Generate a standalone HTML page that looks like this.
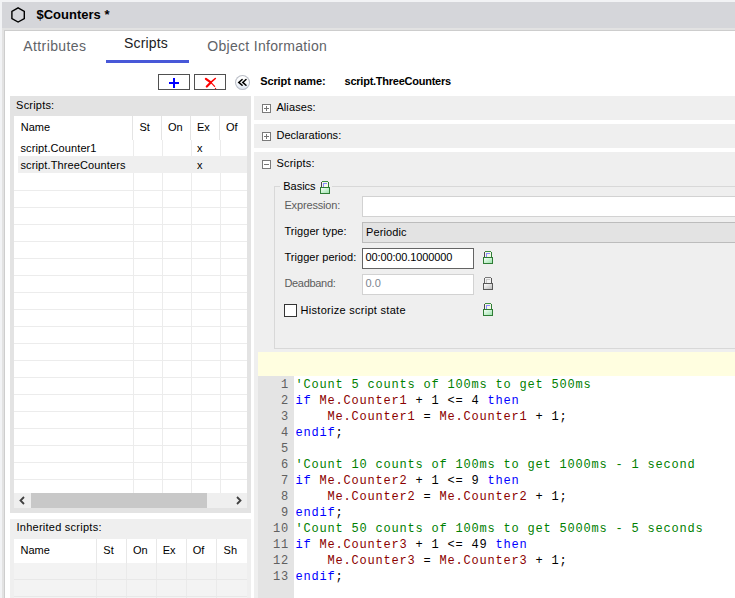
<!DOCTYPE html>
<html><head><meta charset="utf-8">
<style>
*{box-sizing:border-box;margin:0;padding:0}
html,body{width:735px;height:598px;overflow:hidden}
body{position:relative;background:#f2f3f5;font-family:"Liberation Sans",sans-serif;font-size:11px;color:#1a1a1a}
.a{position:absolute}
.t{position:absolute;white-space:pre;line-height:1}
</style></head><body>
<div class="a" style="left:2px;top:2px;width:733px;height:26px;background:#d5d6da;"></div>
<svg class="a" style="left:10px;top:6px" width="17" height="17" viewBox="0 0 17 17"><polygon points="8.1,1.8 14.3,5.3 14.3,12.5 8.1,16 1.9,12.5 1.9,5.3" fill="none" stroke="#000" stroke-width="1.4"/></svg>
<div class="t" style="left:36.5px;top:8.00px;font-size:13px;color:#000;font-family:'Liberation Sans',sans-serif;font-weight:bold;">$Counters *</div>
<div class="a" style="left:2px;top:28px;width:733px;height:570px;background:#e2e2e2;"></div>
<div class="a" style="left:4px;top:30px;width:731px;height:568px;background:#cdcdcd;"></div>
<div class="a" style="left:5px;top:31px;width:730px;height:567px;background:#fff;"></div>
<div class="t" style="left:23.3px;top:39.15px;font-size:14px;color:#5f6368;font-family:'Liberation Sans',sans-serif;letter-spacing:0.4px;">Attributes</div>
<div class="t" style="left:124.1px;top:36.15px;font-size:14px;color:#202124;font-family:'Liberation Sans',sans-serif;letter-spacing:0.15px;">Scripts</div>
<div class="t" style="left:207.3px;top:39.15px;font-size:14px;color:#5f6368;font-family:'Liberation Sans',sans-serif;letter-spacing:0.3px;">Object Information</div>
<div class="a" style="left:106px;top:60px;width:83px;height:3px;background:#4858d8;"></div>
<div class="a" style="left:158px;top:74px;width:32px;height:16px;background:#fff;border:1px solid #505050;"></div>
<div class="a" style="left:169px;top:82px;width:10px;height:2px;background:#0000ff;"></div>
<div class="a" style="left:173px;top:78px;width:2px;height:10px;background:#0000ff;"></div>
<div class="a" style="left:194px;top:74px;width:32px;height:16px;background:#fff;border:1px solid #505050;"></div>
<svg class="a" style="left:204px;top:77px" width="14" height="13" viewBox="0 0 14 13"><path d="M1.9,1.8 L6.8,5.4 L2.8,9.5" fill="none" stroke="#f00" stroke-width="2.2" stroke-linecap="round" stroke-linejoin="round"/><path d="M6.8,5.4 L11.3,1.5" fill="none" stroke="#f00" stroke-width="1.6" stroke-linecap="round"/><path d="M6.8,5.4 L10.6,9.3" fill="none" stroke="#f00" stroke-width="1.2" stroke-linecap="round"/><circle cx="11.5" cy="11.4" r="0.7" fill="#f00"/></svg>
<div class="a" style="left:235px;top:75px;width:15px;height:15px;border-radius:50%;background:linear-gradient(180deg,#ffffff 0%,#fbfcfd 45%,#d9e2ef 100%);box-shadow:0 0 0 1px #b9bdc6 inset"></div>
<svg class="a" style="left:237px;top:78px" width="11" height="9" viewBox="0 0 11 9"><path d="M5.1,1.5 L1.8,4.4 L5.1,7.3 M9,1.5 L5.8,4.4 L9,7.3" fill="none" stroke="#000" stroke-width="1.5" stroke-linecap="round"/></svg>
<div class="t" style="left:260.2px;top:75.69px;font-size:11px;color:#000;font-family:'Liberation Sans',sans-serif;font-weight:bold;letter-spacing:-0.1px;">Script name:</div>
<div class="t" style="left:344.6px;top:75.69px;font-size:11px;color:#000;font-family:'Liberation Sans',sans-serif;font-weight:bold;letter-spacing:-0.25px;">script.ThreeCounters</div>
<div class="a" style="left:10px;top:96px;width:241px;height:417px;background:#e3e3e3;"></div>
<div class="t" style="left:16.1px;top:99.69px;font-size:11px;color:#000;font-family:'Liberation Sans',sans-serif;letter-spacing:0.2px;">Scripts:</div>
<div class="a" style="left:14px;top:116px;width:233px;height:377px;background:#fff;"></div>
<div class="a" style="left:132px;top:116px;width:1px;height:24px;background:#e4e4e4;"></div>
<div class="a" style="left:161px;top:116px;width:1px;height:24px;background:#e4e4e4;"></div>
<div class="a" style="left:190px;top:116px;width:1px;height:24px;background:#e4e4e4;"></div>
<div class="a" style="left:219px;top:116px;width:1px;height:24px;background:#e4e4e4;"></div>
<div class="t" style="left:20.8px;top:121.69px;font-size:11px;color:#000;font-family:'Liberation Sans',sans-serif;">Name</div>
<div class="t" style="left:139.4px;top:121.69px;font-size:11px;color:#000;font-family:'Liberation Sans',sans-serif;">St</div>
<div class="t" style="left:168px;top:121.69px;font-size:11px;color:#000;font-family:'Liberation Sans',sans-serif;">On</div>
<div class="t" style="left:197px;top:121.69px;font-size:11px;color:#000;font-family:'Liberation Sans',sans-serif;">Ex</div>
<div class="t" style="left:226px;top:121.69px;font-size:11px;color:#000;font-family:'Liberation Sans',sans-serif;">Of</div>
<div class="a" style="left:133px;top:140px;width:1px;height:353px;background:#ececec;"></div>
<div class="a" style="left:162px;top:140px;width:1px;height:353px;background:#ececec;"></div>
<div class="a" style="left:191px;top:140px;width:1px;height:353px;background:#ececec;"></div>
<div class="a" style="left:220px;top:140px;width:1px;height:353px;background:#ececec;"></div>
<div class="a" style="left:14px;top:190px;width:233px;height:1px;background:#ececec;"></div>
<div class="a" style="left:14px;top:207px;width:233px;height:1px;background:#ececec;"></div>
<div class="a" style="left:14px;top:224px;width:233px;height:1px;background:#ececec;"></div>
<div class="a" style="left:14px;top:241px;width:233px;height:1px;background:#ececec;"></div>
<div class="a" style="left:14px;top:258px;width:233px;height:1px;background:#ececec;"></div>
<div class="a" style="left:14px;top:275px;width:233px;height:1px;background:#ececec;"></div>
<div class="a" style="left:14px;top:292px;width:233px;height:1px;background:#ececec;"></div>
<div class="a" style="left:14px;top:309px;width:233px;height:1px;background:#ececec;"></div>
<div class="a" style="left:14px;top:326px;width:233px;height:1px;background:#ececec;"></div>
<div class="a" style="left:14px;top:343px;width:233px;height:1px;background:#ececec;"></div>
<div class="a" style="left:14px;top:360px;width:233px;height:1px;background:#ececec;"></div>
<div class="a" style="left:14px;top:377px;width:233px;height:1px;background:#ececec;"></div>
<div class="a" style="left:14px;top:394px;width:233px;height:1px;background:#ececec;"></div>
<div class="a" style="left:14px;top:411px;width:233px;height:1px;background:#ececec;"></div>
<div class="a" style="left:14px;top:428px;width:233px;height:1px;background:#ececec;"></div>
<div class="a" style="left:14px;top:445px;width:233px;height:1px;background:#ececec;"></div>
<div class="a" style="left:14px;top:462px;width:233px;height:1px;background:#ececec;"></div>
<div class="a" style="left:14px;top:479px;width:233px;height:1px;background:#ececec;"></div>
<div class="a" style="left:18px;top:156px;width:229px;height:17px;background:#efefef;"></div>
<div class="t" style="left:20.5px;top:142.69px;font-size:11px;color:#000;font-family:'Liberation Sans',sans-serif;letter-spacing:0.1px;">script.Counter1</div>
<div class="t" style="left:197px;top:142.69px;font-size:11px;color:#000;font-family:'Liberation Sans',sans-serif;">x</div>
<div class="t" style="left:20.5px;top:159.69px;font-size:11px;color:#000;font-family:'Liberation Sans',sans-serif;letter-spacing:0.12px;">script.ThreeCounters</div>
<div class="t" style="left:197px;top:159.69px;font-size:11px;color:#000;font-family:'Liberation Sans',sans-serif;">x</div>
<div class="a" style="left:14px;top:493px;width:233px;height:15px;background:#efefef;"></div>
<div class="a" style="left:31px;top:493px;width:176px;height:15px;background:#c8c8c8;"></div>
<svg class="a" style="left:18px;top:496px" width="8" height="9" viewBox="0 0 8 9"><path d="M6,1 L2.5,4.5 L6,8" fill="none" stroke="#404040" stroke-width="1.8"/></svg>
<svg class="a" style="left:235px;top:496px" width="8" height="9" viewBox="0 0 8 9"><path d="M2,1 L5.5,4.5 L2,8" fill="none" stroke="#404040" stroke-width="1.8"/></svg>
<div class="a" style="left:10px;top:519px;width:241px;height:79px;background:#efefef;"></div>
<div class="t" style="left:16.5px;top:522.19px;font-size:11px;color:#000;font-family:'Liberation Sans',sans-serif;letter-spacing:0.25px;">Inherited scripts:</div>
<div class="a" style="left:14px;top:539px;width:233px;height:24px;background:#fff;"></div>
<div class="a" style="left:14px;top:563px;width:233px;height:35px;background:#f3f3f3;"></div>
<div class="a" style="left:96px;top:539px;width:1px;height:24px;background:#e8e8e8;"></div>
<div class="a" style="left:96px;top:563px;width:1px;height:35px;background:#eaeaea;"></div>
<div class="a" style="left:126px;top:539px;width:1px;height:24px;background:#e8e8e8;"></div>
<div class="a" style="left:126px;top:563px;width:1px;height:35px;background:#eaeaea;"></div>
<div class="a" style="left:156px;top:539px;width:1px;height:24px;background:#e8e8e8;"></div>
<div class="a" style="left:156px;top:563px;width:1px;height:35px;background:#eaeaea;"></div>
<div class="a" style="left:186px;top:539px;width:1px;height:24px;background:#e8e8e8;"></div>
<div class="a" style="left:186px;top:563px;width:1px;height:35px;background:#eaeaea;"></div>
<div class="a" style="left:216px;top:539px;width:1px;height:24px;background:#e8e8e8;"></div>
<div class="a" style="left:216px;top:563px;width:1px;height:35px;background:#eaeaea;"></div>
<div class="a" style="left:14px;top:579px;width:233px;height:1px;background:#e8e8e8;"></div>
<div class="a" style="left:14px;top:596px;width:233px;height:1px;background:#e8e8e8;"></div>
<div class="t" style="left:20.5px;top:544.69px;font-size:11px;color:#000;font-family:'Liberation Sans',sans-serif;">Name</div>
<div class="t" style="left:103.3px;top:544.69px;font-size:11px;color:#000;font-family:'Liberation Sans',sans-serif;">St</div>
<div class="t" style="left:133px;top:544.69px;font-size:11px;color:#000;font-family:'Liberation Sans',sans-serif;">On</div>
<div class="t" style="left:162.7px;top:544.69px;font-size:11px;color:#000;font-family:'Liberation Sans',sans-serif;">Ex</div>
<div class="t" style="left:192.8px;top:544.69px;font-size:11px;color:#000;font-family:'Liberation Sans',sans-serif;">Of</div>
<div class="t" style="left:223.6px;top:544.69px;font-size:11px;color:#000;font-family:'Liberation Sans',sans-serif;">Sh</div>
<div class="a" style="left:254px;top:96px;width:481px;height:24px;background:#efefef;"></div>
<div class="a" style="left:254px;top:124px;width:481px;height:24px;background:#efefef;"></div>
<div class="a" style="left:254px;top:152px;width:481px;height:446px;background:#efefef;"></div>
<div class="a" style="left:262px;top:104px;width:9px;height:9px;background:#fff;border:1px solid #7a7a7a;"></div>
<div class="a" style="left:264px;top:108px;width:5px;height:1px;background:#767676;"></div>
<div class="a" style="left:266px;top:106px;width:1px;height:5px;background:#767676;"></div>
<div class="t" style="left:276.4px;top:101.69px;font-size:11px;color:#000;font-family:'Liberation Sans',sans-serif;letter-spacing:0.1px;">Aliases:</div>
<div class="a" style="left:262px;top:132px;width:9px;height:9px;background:#fff;border:1px solid #7a7a7a;"></div>
<div class="a" style="left:264px;top:136px;width:5px;height:1px;background:#767676;"></div>
<div class="a" style="left:266px;top:134px;width:1px;height:5px;background:#767676;"></div>
<div class="t" style="left:276.4px;top:129.69px;font-size:11px;color:#000;font-family:'Liberation Sans',sans-serif;letter-spacing:0.05px;">Declarations:</div>
<div class="a" style="left:262px;top:160px;width:9px;height:9px;background:#fff;border:1px solid #7a7a7a;"></div>
<div class="a" style="left:264px;top:164px;width:5px;height:1px;background:#767676;"></div>
<div class="t" style="left:276.4px;top:157.69px;font-size:11px;color:#000;font-family:'Liberation Sans',sans-serif;letter-spacing:0.2px;">Scripts:</div>
<div class="a" style="left:274px;top:186px;width:470px;height:163px;border:1px solid #d8d8d8;"></div>
<div class="a" style="left:280px;top:180px;width:52px;height:14px;background:#efefef;"></div>
<div class="t" style="left:283.2px;top:180.69px;font-size:11px;color:#000;font-family:'Liberation Sans',sans-serif;">Basics</div>
<svg class="a" style="left:320px;top:180px" width="10" height="14" viewBox="0 0 10 14" shape-rendering="crispEdges"><defs><linearGradient id="g320_180" x1="0" y1="0" x2="1" y2="1"><stop offset="0" stop-color="#f4fff4"/><stop offset="1" stop-color="#9fe3b0"/></linearGradient></defs><rect x="2" y="1" width="6" height="1" fill="#3f8f45"/><rect x="1" y="2" width="1" height="5" fill="#4a4a4a"/><rect x="8" y="2" width="1" height="5" fill="#2f7d35"/><rect x="2" y="2" width="6" height="5" fill="#f4f8e8"/><rect x="3" y="3" width="1" height="4" fill="#8c8cff"/><rect x="3" y="3" width="4" height="1" fill="#8c8cff"/><rect x="0" y="7" width="10" height="7" fill="#2f7d35"/><rect x="1" y="8" width="8" height="5" fill="url(#g320_180)"/></svg>
<div class="t" style="left:284.4px;top:199.69px;font-size:11px;color:#5c5c5c;font-family:'Liberation Sans',sans-serif;letter-spacing:-0.15px;">Expression:</div>
<div class="t" style="left:284.4px;top:225.69px;font-size:11px;color:#000;font-family:'Liberation Sans',sans-serif;letter-spacing:0.07px;">Trigger type:</div>
<div class="t" style="left:284.4px;top:251.69px;font-size:11px;color:#000;font-family:'Liberation Sans',sans-serif;letter-spacing:0.05px;">Trigger period:</div>
<div class="t" style="left:284.4px;top:277.69px;font-size:11px;color:#5c5c5c;font-family:'Liberation Sans',sans-serif;letter-spacing:-0.3px;">Deadband:</div>
<div class="a" style="left:362px;top:196px;width:400px;height:21px;background:#fff;border:1px solid #d2d2d2;"></div>
<div class="a" style="left:362px;top:222px;width:400px;height:21px;background:#e3e3e3;border:1px solid #bcbcbc;"></div>
<div class="t" style="left:366px;top:226.69px;font-size:11px;color:#000;font-family:'Liberation Sans',sans-serif;letter-spacing:0.1px;">Periodic</div>
<div class="a" style="left:362px;top:248px;width:112px;height:21px;background:#fff;border:1px solid #646464;"></div>
<div class="t" style="left:365.5px;top:251.69px;font-size:11px;color:#000;font-family:'Liberation Sans',sans-serif;letter-spacing:-0.12px;">00:00:00.1000000</div>
<div class="a" style="left:362px;top:274px;width:112px;height:21px;background:#fff;border:1px solid #d2d2d2;"></div>
<div class="t" style="left:365.5px;top:277.69px;font-size:11px;color:#7d8590;font-family:'Liberation Sans',sans-serif;">0.0</div>
<svg class="a" style="left:483px;top:250px" width="10" height="14" viewBox="0 0 10 14" shape-rendering="crispEdges"><defs><linearGradient id="g483_250" x1="0" y1="0" x2="1" y2="1"><stop offset="0" stop-color="#f4fff4"/><stop offset="1" stop-color="#9fe3b0"/></linearGradient></defs><rect x="2" y="1" width="6" height="1" fill="#3f8f45"/><rect x="1" y="2" width="1" height="5" fill="#4a4a4a"/><rect x="8" y="2" width="1" height="5" fill="#2f7d35"/><rect x="2" y="2" width="6" height="5" fill="#f4f8e8"/><rect x="3" y="3" width="1" height="4" fill="#8c8cff"/><rect x="3" y="3" width="4" height="1" fill="#8c8cff"/><rect x="0" y="7" width="10" height="7" fill="#2f7d35"/><rect x="1" y="8" width="8" height="5" fill="url(#g483_250)"/></svg>
<svg class="a" style="left:483px;top:276px" width="10" height="14" viewBox="0 0 10 14" shape-rendering="crispEdges"><defs><linearGradient id="g483_276" x1="0" y1="0" x2="1" y2="1"><stop offset="0" stop-color="#ffffff"/><stop offset="1" stop-color="#bdbdbd"/></linearGradient></defs><rect x="2" y="1" width="6" height="1" fill="#7a7a7a"/><rect x="1" y="2" width="1" height="5" fill="#666"/><rect x="8" y="2" width="1" height="5" fill="#555"/><rect x="2" y="2" width="6" height="5" fill="#f2f2f2"/><rect x="3" y="3" width="1" height="4" fill="#c9c9c9"/><rect x="3" y="3" width="4" height="1" fill="#c9c9c9"/><rect x="0" y="7" width="10" height="7" fill="#5a5a5a"/><rect x="1" y="8" width="8" height="5" fill="url(#g483_276)"/></svg>
<svg class="a" style="left:483px;top:302px" width="10" height="14" viewBox="0 0 10 14" shape-rendering="crispEdges"><defs><linearGradient id="g483_302" x1="0" y1="0" x2="1" y2="1"><stop offset="0" stop-color="#f4fff4"/><stop offset="1" stop-color="#9fe3b0"/></linearGradient></defs><rect x="2" y="1" width="6" height="1" fill="#3f8f45"/><rect x="1" y="2" width="1" height="5" fill="#4a4a4a"/><rect x="8" y="2" width="1" height="5" fill="#2f7d35"/><rect x="2" y="2" width="6" height="5" fill="#f4f8e8"/><rect x="3" y="3" width="1" height="4" fill="#8c8cff"/><rect x="3" y="3" width="4" height="1" fill="#8c8cff"/><rect x="0" y="7" width="10" height="7" fill="#2f7d35"/><rect x="1" y="8" width="8" height="5" fill="url(#g483_302)"/></svg>
<div class="a" style="left:284px;top:304px;width:13px;height:13px;background:#fff;border:1px solid #333;"></div>
<div class="t" style="left:300.6px;top:304.69px;font-size:11px;color:#000;font-family:'Liberation Sans',sans-serif;letter-spacing:0.28px;">Historize script state</div>
<div class="a" style="left:258px;top:352px;width:477px;height:24px;background:#fffee0;"></div>
<div class="a" style="left:258px;top:376px;width:36px;height:222px;background:#e4e4e4;"></div>
<div class="a" style="left:294px;top:376px;width:441px;height:222px;background:#fff;"></div>
<div class="t" style="left:281px;top:378.80px;font-size:12.0px;color:#606060;font-family:'Liberation Mono',monospace;letter-spacing:0.8000000000000007px;">1</div>
<div class="t" style="left:295.5px;top:378.80px;font-size:12.0px;color:#000;font-family:'Liberation Mono',monospace;letter-spacing:0.8000000000000007px;"><span style="color:#008000">'Count 5 counts of 100ms to get 500ms</span></div>
<div class="t" style="left:281px;top:394.80px;font-size:12.0px;color:#606060;font-family:'Liberation Mono',monospace;letter-spacing:0.8000000000000007px;">2</div>
<div class="t" style="left:295.5px;top:394.80px;font-size:12.0px;color:#000;font-family:'Liberation Mono',monospace;letter-spacing:0.8000000000000007px;"><span style="color:#0000ff">if</span><span style="color:#000"> </span><span style="color:#8b0000">Me.Counter1</span><span style="color:#000"> + 1 &lt;= 4 </span><span style="color:#0000ff">then</span></div>
<div class="t" style="left:281px;top:410.80px;font-size:12.0px;color:#606060;font-family:'Liberation Mono',monospace;letter-spacing:0.8000000000000007px;">3</div>
<div class="t" style="left:295.5px;top:410.80px;font-size:12.0px;color:#000;font-family:'Liberation Mono',monospace;letter-spacing:0.8000000000000007px;"><span style="color:#000">    </span><span style="color:#8b0000">Me.Counter1</span><span style="color:#000"> = </span><span style="color:#8b0000">Me.Counter1</span><span style="color:#000"> + 1;</span></div>
<div class="t" style="left:281px;top:426.80px;font-size:12.0px;color:#606060;font-family:'Liberation Mono',monospace;letter-spacing:0.8000000000000007px;">4</div>
<div class="t" style="left:295.5px;top:426.80px;font-size:12.0px;color:#000;font-family:'Liberation Mono',monospace;letter-spacing:0.8000000000000007px;"><span style="color:#0000ff">endif</span><span style="color:#000">;</span></div>
<div class="t" style="left:281px;top:442.80px;font-size:12.0px;color:#606060;font-family:'Liberation Mono',monospace;letter-spacing:0.8000000000000007px;">5</div>
<div class="t" style="left:281px;top:458.80px;font-size:12.0px;color:#606060;font-family:'Liberation Mono',monospace;letter-spacing:0.8000000000000007px;">6</div>
<div class="t" style="left:295.5px;top:458.80px;font-size:12.0px;color:#000;font-family:'Liberation Mono',monospace;letter-spacing:0.8000000000000007px;"><span style="color:#008000">'Count 10 counts of 100ms to get 1000ms - 1 second</span></div>
<div class="t" style="left:281px;top:474.80px;font-size:12.0px;color:#606060;font-family:'Liberation Mono',monospace;letter-spacing:0.8000000000000007px;">7</div>
<div class="t" style="left:295.5px;top:474.80px;font-size:12.0px;color:#000;font-family:'Liberation Mono',monospace;letter-spacing:0.8000000000000007px;"><span style="color:#0000ff">if</span><span style="color:#000"> </span><span style="color:#8b0000">Me.Counter2</span><span style="color:#000"> + 1 &lt;= 9 </span><span style="color:#0000ff">then</span></div>
<div class="t" style="left:281px;top:490.80px;font-size:12.0px;color:#606060;font-family:'Liberation Mono',monospace;letter-spacing:0.8000000000000007px;">8</div>
<div class="t" style="left:295.5px;top:490.80px;font-size:12.0px;color:#000;font-family:'Liberation Mono',monospace;letter-spacing:0.8000000000000007px;"><span style="color:#000">    </span><span style="color:#8b0000">Me.Counter2</span><span style="color:#000"> = </span><span style="color:#8b0000">Me.Counter2</span><span style="color:#000"> + 1;</span></div>
<div class="t" style="left:281px;top:506.80px;font-size:12.0px;color:#606060;font-family:'Liberation Mono',monospace;letter-spacing:0.8000000000000007px;">9</div>
<div class="t" style="left:295.5px;top:506.80px;font-size:12.0px;color:#000;font-family:'Liberation Mono',monospace;letter-spacing:0.8000000000000007px;"><span style="color:#0000ff">endif</span><span style="color:#000">;</span></div>
<div class="t" style="left:273px;top:522.80px;font-size:12.0px;color:#606060;font-family:'Liberation Mono',monospace;letter-spacing:0.8000000000000007px;">10</div>
<div class="t" style="left:295.5px;top:522.80px;font-size:12.0px;color:#000;font-family:'Liberation Mono',monospace;letter-spacing:0.8000000000000007px;"><span style="color:#008000">'Count 50 counts of 100ms to get 5000ms - 5 seconds</span></div>
<div class="t" style="left:273px;top:538.80px;font-size:12.0px;color:#606060;font-family:'Liberation Mono',monospace;letter-spacing:0.8000000000000007px;">11</div>
<div class="t" style="left:295.5px;top:538.80px;font-size:12.0px;color:#000;font-family:'Liberation Mono',monospace;letter-spacing:0.8000000000000007px;"><span style="color:#0000ff">if</span><span style="color:#000"> </span><span style="color:#8b0000">Me.Counter3</span><span style="color:#000"> + 1 &lt;= 49 </span><span style="color:#0000ff">then</span></div>
<div class="t" style="left:273px;top:554.80px;font-size:12.0px;color:#606060;font-family:'Liberation Mono',monospace;letter-spacing:0.8000000000000007px;">12</div>
<div class="t" style="left:295.5px;top:554.80px;font-size:12.0px;color:#000;font-family:'Liberation Mono',monospace;letter-spacing:0.8000000000000007px;"><span style="color:#000">    </span><span style="color:#8b0000">Me.Counter3</span><span style="color:#000"> = </span><span style="color:#8b0000">Me.Counter3</span><span style="color:#000"> + 1;</span></div>
<div class="t" style="left:273px;top:570.80px;font-size:12.0px;color:#606060;font-family:'Liberation Mono',monospace;letter-spacing:0.8000000000000007px;">13</div>
<div class="t" style="left:295.5px;top:570.80px;font-size:12.0px;color:#000;font-family:'Liberation Mono',monospace;letter-spacing:0.8000000000000007px;"><span style="color:#0000ff">endif</span><span style="color:#000">;</span></div>
</body></html>
